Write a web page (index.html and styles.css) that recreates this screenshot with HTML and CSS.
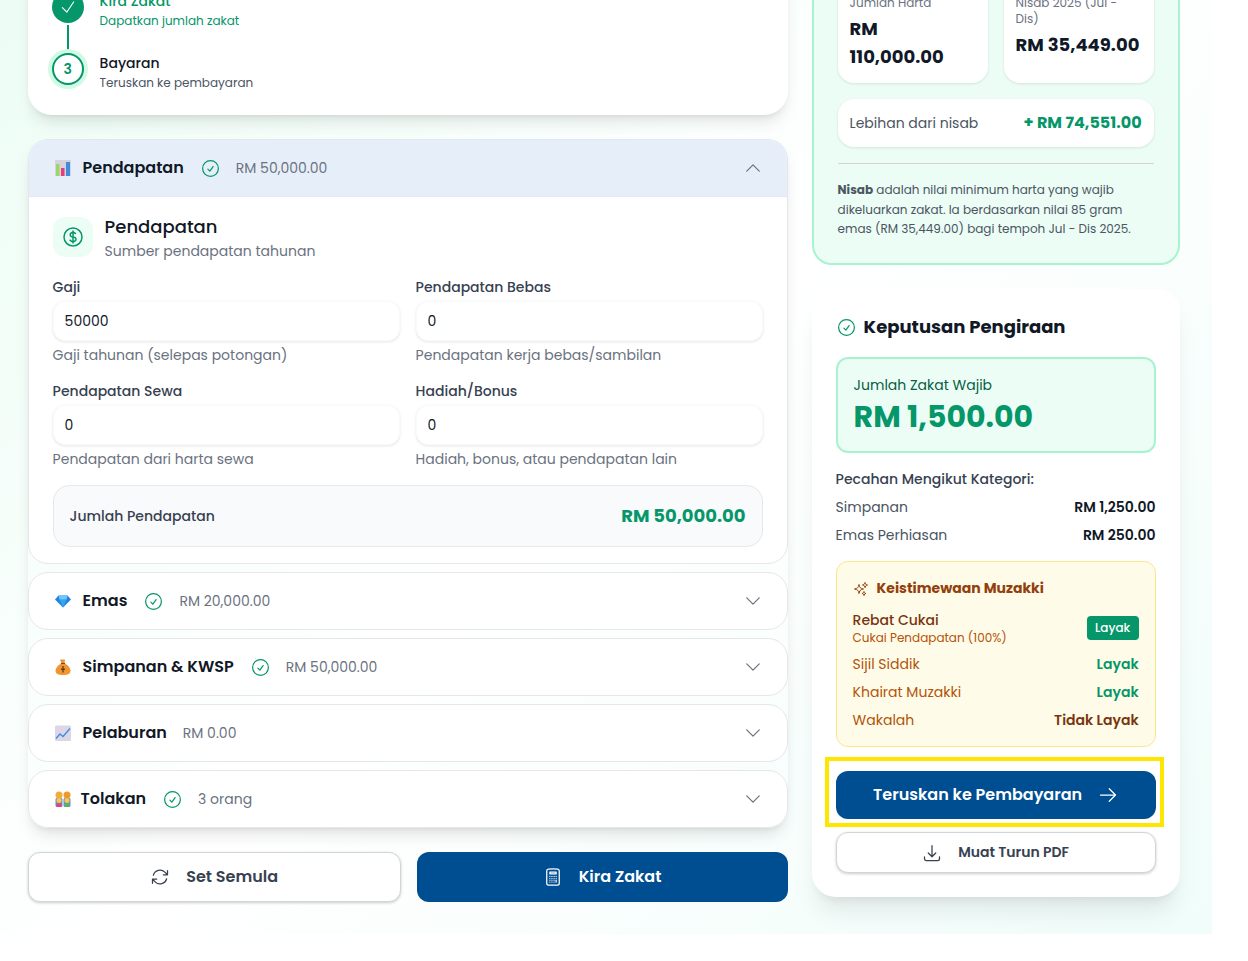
FILE: index.html
```html
<!DOCTYPE html>
<html lang="en">
<head>
    <meta charset="UTF-8">
    <meta name="viewport" content="width=device-width, initial-scale=1.0">
    <title>Kalkulator Zakat</title>
    <link rel="stylesheet" href="styles.css">
</head>
<body>

    <svg class="icon-sheet" aria-hidden="true">
        <symbol id="i-check-circle" viewBox="0 0 24 24"><path d="M9 12.75 11.25 15 15 9.75M21 12a9 9 0 1 1-18 0 9 9 0 0 1 18 0Z"/></symbol>
        <symbol id="i-check" viewBox="0 0 24 24"><path d="m4.5 12.75 6 6 9-13.5"/></symbol>
        <symbol id="i-down" viewBox="0 0 24 24"><path d="m19.5 8.25-7.5 7.5-7.5-7.5"/></symbol>
        <symbol id="i-up" viewBox="0 0 24 24"><path d="m4.5 15.75 7.5-7.5 7.5 7.5"/></symbol>
        <symbol id="i-dollar" viewBox="0 0 24 24"><path d="M12 6v12m-3-2.818.879.659c1.171.879 3.07.879 4.242 0 1.172-.879 1.172-2.303 0-3.182C13.536 12.219 12.768 12 12 12c-.725 0-1.45-.22-2.003-.659-1.106-.879-1.106-2.303 0-3.182s2.9-.879 4.006 0l.415.33M21 12a9 9 0 1 1-18 0 9 9 0 0 1 18 0Z"/></symbol>
        <symbol id="i-refresh" viewBox="0 0 24 24"><path d="M16.023 9.348h4.992v-.001M2.985 19.644v-4.992m0 0h4.992m-4.993 0 3.181 3.183a8.25 8.25 0 0 0 13.803-3.7M4.031 9.865a8.25 8.25 0 0 1 13.803-3.7l3.181 3.182m0-4.991v4.99"/></symbol>
        <symbol id="i-calc" viewBox="0 0 24 24"><path d="M15.75 15.75V18m-7.5-6.75h.008v.008H8.25v-.008Zm0 2.25h.008v.008H8.25V13.5Zm0 2.25h.008v.008H8.25v-.008Zm0 2.25h.008v.008H8.25V18Zm2.498-6.75h.007v.008h-.007v-.008Zm0 2.25h.007v.008h-.007V13.5Zm0 2.25h.007v.008h-.007v-.008Zm0 2.25h.007v.008h-.007V18Zm2.504-6.75h.008v.008h-.008v-.008Zm0 2.25h.008v.008h-.008V13.5Zm0 2.25h.008v.008h-.008v-.008Zm0 2.25h.008v.008h-.008V18Zm2.498-6.75h.008v.008h-.008v-.008Zm0 2.25h.008v.008h-.008V13.5ZM8.25 6h7.5v2.25h-7.5V6ZM12 2.25c-1.892 0-3.758.11-5.593.322C5.307 2.7 4.5 3.65 4.5 4.757V19.5a2.25 2.25 0 0 0 2.25 2.25h10.5a2.25 2.25 0 0 0 2.25-2.25V4.757c0-1.108-.806-2.057-1.907-2.185A48.507 48.507 0 0 0 12 2.25Z"/></symbol>
        <symbol id="i-sparkles" viewBox="0 0 24 24"><path d="M9.813 15.904 9 18.75l-.813-2.846a4.5 4.5 0 0 0-3.09-3.09L2.25 12l2.846-.813a4.5 4.5 0 0 0 3.09-3.09L9 5.25l.813 2.846a4.5 4.5 0 0 0 3.09 3.09L15.75 12l-2.846.813a4.5 4.5 0 0 0-3.09 3.09ZM18.259 8.715 18 9.75l-.259-1.035a3.375 3.375 0 0 0-2.455-2.456L14.25 6l1.036-.259a3.375 3.375 0 0 0 2.455-2.456L18 2.25l.259 1.035a3.375 3.375 0 0 0 2.456 2.456L21.75 6l-1.035.259a3.375 3.375 0 0 0-2.456 2.456ZM16.894 20.567 16.5 21.75l-.394-1.183a2.25 2.25 0 0 0-1.423-1.423L13.5 18.75l1.183-.394a2.25 2.25 0 0 0 1.423-1.423l.394-1.183.394 1.183a2.25 2.25 0 0 0 1.423 1.423l1.183.394-1.183.394a2.25 2.25 0 0 0-1.423 1.423Z"/></symbol>
        <symbol id="i-arrow" viewBox="0 0 24 24"><path d="M13.5 4.5 21 12m0 0-7.5 7.5M21 12H3"/></symbol>
        <symbol id="i-download" viewBox="0 0 24 24"><path d="M3 16.5v2.25A2.25 2.25 0 0 0 5.25 21h13.5A2.25 2.25 0 0 0 21 18.75V16.5M16.5 12 12 16.5m0 0L7.5 12m4.5 4.5V3"/></symbol>
    </svg>

    <div class="page">
        <div class="left-col">

            <div class="card steps">
                <div class="step">
                    <div class="step-marker">
                        <div class="step-circle done"><svg class="ico ico-18"><use href="#i-check"/></svg></div>
                        <div class="step-line"></div>
                    </div>
                    <div class="step-text done-text">
                        <div class="step-title">Kira Zakat</div>
                        <div class="step-sub">Dapatkan jumlah zakat</div>
                    </div>
                </div>
                <div class="step">
                    <div class="step-marker">
                        <div class="step-circle current">3</div>
                    </div>
                    <div class="step-text">
                        <div class="step-title">Bayaran</div>
                        <div class="step-sub">Teruskan ke pembayaran</div>
                    </div>
                </div>
            </div>

            <div class="accordion">
                <div class="acc-item">
                    <div class="acc-head open">
                        <svg class="emoji" viewBox="0 0 16 16">
                            <rect x="0" y="0" width="16" height="16" rx="1" fill="#d6d3dc"/>
                            <rect x="1" y="4" width="3.500" height="12" fill="#97d86a"/>
                            <rect x="6" y="8" width="3.500" height="8" fill="#ea3a7c"/>
                            <rect x="11" y="2" width="4" height="14" fill="#3e8edb"/>
                        </svg>
                        <span class="acc-title">Pendapatan</span>
                        <svg class="ico ico-check"><use href="#i-check-circle"/></svg>
                        <span class="acc-value">RM 50,000.00</span>
                        <svg class="ico chevron"><use href="#i-up"/></svg>
                    </div>
                    <div class="acc-body">
                        <div class="section-head">
                            <div class="section-icon"><svg class="ico ico-24"><use href="#i-dollar"/></svg></div>
                            <div>
                                <div class="section-title">Pendapatan</div>
                                <div class="section-sub">Sumber pendapatan tahunan</div>
                            </div>
                        </div>
                        <div class="fields">
                            <div class="field">
                                <label>Gaji</label>
                                <input type="text" value="50000">
                                <div class="hint">Gaji tahunan (selepas potongan)</div>
                            </div>
                            <div class="field">
                                <label>Pendapatan Bebas</label>
                                <input type="text" value="0">
                                <div class="hint">Pendapatan kerja bebas/sambilan</div>
                            </div>
                            <div class="field">
                                <label>Pendapatan Sewa</label>
                                <input type="text" value="0">
                                <div class="hint">Pendapatan dari harta sewa</div>
                            </div>
                            <div class="field">
                                <label>Hadiah/Bonus</label>
                                <input type="text" value="0">
                                <div class="hint">Hadiah, bonus, atau pendapatan lain</div>
                            </div>
                        </div>
                        <div class="total-box">
                            <span class="total-label">Jumlah Pendapatan</span>
                            <span class="total-value">RM 50,000.00</span>
                        </div>
                    </div>
                </div>

                <div class="acc-item">
                    <div class="acc-head">
                        <svg class="emoji" viewBox="0 0 16 16">
                            <path d="M3.500 2.500h9L16 6.500l-8 8-8-8Z" fill="#1f84e0"/>
                            <path d="M4.500 6.500h7L8 14.500Z" fill="#3ba2f2"/>
                            <path d="M3.500 2.500h9l-1 4h-7Z" fill="#6ec6fb"/>
                        </svg>
                        <span class="acc-title">Emas</span>
                        <svg class="ico ico-check"><use href="#i-check-circle"/></svg>
                        <span class="acc-value">RM 20,000.00</span>
                        <svg class="ico chevron"><use href="#i-down"/></svg>
                    </div>
                </div>

                <div class="acc-item">
                    <div class="acc-head">
                        <svg class="emoji" viewBox="0 0 16 16">
                            <path d="M5 0.500h5L9.500 4.500h-3Z" fill="#e8983c"/>
                            <path d="M6 4.500h4C13 6.500 15.500 9 15.500 11.500 15.500 15 12.500 16 8 16S0.500 15 0.500 11.500C0.500 9 3 6.500 6 4.500Z" fill="#f0952f"/>
                            <rect x="6" y="4" width="4" height="1" fill="#6b4a2a"/>
                            <rect x="7.400" y="7" width="1.200" height="6.500" fill="#5b3a1a"/>
                            <rect x="6" y="9.600" width="4" height="1.300" fill="#5b3a1a"/>
                        </svg>
                        <span class="acc-title">Simpanan &amp; KWSP</span>
                        <svg class="ico ico-check"><use href="#i-check-circle"/></svg>
                        <span class="acc-value">RM 50,000.00</span>
                        <svg class="ico chevron"><use href="#i-down"/></svg>
                    </div>
                </div>

                <div class="acc-item">
                    <div class="acc-head">
                        <svg class="emoji" viewBox="0 0 16 16">
                            <rect x="0" y="0.500" width="16" height="15.500" rx="1" fill="#dcd6e6"/>
                            <path d="M1 13.500 5 9l3 2.500L15 3.500" fill="none" stroke="#3f8fe0" stroke-width="1.400"/>
                        </svg>
                        <span class="acc-title">Pelaburan</span>
                        <span class="acc-value">RM 0.00</span>
                        <svg class="ico chevron"><use href="#i-down"/></svg>
                    </div>
                </div>

                <div class="acc-item">
                    <div class="acc-head">
                        <svg class="emoji wide" viewBox="0 0 18 16">
                            <rect x="1.500" y="7" width="7" height="9" rx="1.500" fill="#6a8fc4"/>
                            <rect x="9.500" y="7" width="7" height="9" rx="1.500" fill="#6a8fc4"/>
                            <circle cx="5" cy="4" r="3.500" fill="#f5ab35"/>
                            <circle cx="13" cy="4" r="3.500" fill="#f0982c"/>
                            <circle cx="5" cy="9.500" r="2.500" fill="#f7c948"/>
                            <circle cx="13" cy="9.500" r="2.500" fill="#f7c948"/>
                            <rect x="2.500" y="12.500" width="5" height="3.500" fill="#e0457a"/>
                            <rect x="10.500" y="12.500" width="5" height="3.500" fill="#58b368"/>
                        </svg>
                        <span class="acc-title">Tolakan</span>
                        <svg class="ico ico-check"><use href="#i-check-circle"/></svg>
                        <span class="acc-value">3 orang</span>
                        <svg class="ico chevron"><use href="#i-down"/></svg>
                    </div>
                </div>
            </div>

            <div class="actions">
                <button class="btn btn-white"><svg class="ico ico-20"><use href="#i-refresh"/></svg><span>Set Semula</span></button>
                <button class="btn btn-blue"><svg class="ico ico-20"><use href="#i-calc"/></svg><span>Kira Zakat</span></button>
            </div>
        </div>

        <div class="right-col">
            <div class="nisab-panel">
                <div class="nisab-grid">
                    <div class="mini-card">
                        <div class="mini-label">Jumlah Harta</div>
                        <div class="mini-value">RM 110,000.00</div>
                    </div>
                    <div class="mini-card">
                        <div class="mini-label">Nisab 2025 (Jul - Dis)</div>
                        <div class="mini-value">RM 35,449.00</div>
                    </div>
                </div>
                <div class="excess-row">
                    <span class="excess-label">Lebihan dari nisab</span>
                    <span class="excess-value">+ RM 74,551.00</span>
                </div>
                <p class="nisab-note"><b>Nisab</b> adalah nilai minimum harta yang wajib dikeluarkan zakat. Ia berdasarkan nilai 85 gram emas (RM 35,449.00) bagi tempoh Jul - Dis 2025.</p>
            </div>

            <div class="card result">
                <h3 class="result-title"><svg class="ico ico-check"><use href="#i-check-circle"/></svg><span>Keputusan Pengiraan</span></h3>

                <div class="zakat-box">
                    <div class="zakat-label">Jumlah Zakat Wajib</div>
                    <div class="zakat-amount">RM 1,500.00</div>
                </div>

                <div class="breakdown">
                    <div class="breakdown-title">Pecahan Mengikut Kategori:</div>
                    <div class="breakdown-row"><span>Simpanan</span><b>RM 1,250.00</b></div>
                    <div class="breakdown-row"><span>Emas Perhiasan</span><b>RM 250.00</b></div>
                </div>

                <div class="perks">
                    <div class="perks-title"><svg class="ico ico-16"><use href="#i-sparkles"/></svg>Keistimewaan Muzakki</div>
                    <div class="perk-main">
                        <div>
                            <div class="perk-name">Rebat Cukai</div>
                            <div class="perk-sub">Cukai Pendapatan (100%)</div>
                        </div>
                        <span class="perk-badge">Layak</span>
                    </div>
                    <div class="perk-row"><span>Sijil Siddik</span><b class="yes">Layak</b></div>
                    <div class="perk-row"><span>Khairat Muzakki</span><b class="yes">Layak</b></div>
                    <div class="perk-row"><span>Wakalah</span><b class="no">Tidak Layak</b></div>
                </div>

                <button class="btn btn-blue btn-pay">
                    <span>Teruskan ke Pembayaran</span><svg class="ico ico-20"><use href="#i-arrow"/></svg>
                    <span class="highlight"></span>
                </button>
                <button class="btn btn-white btn-pdf"><svg class="ico ico-20"><use href="#i-download"/></svg>Muat Turun PDF</button>
            </div>
        </div>
    </div>

</body>
</html>
```

FILE: styles.css
```css
* {
    box-sizing: border-box;
}
body {
    margin: 0;
    background: #fff;
    font-family: Poppins, Inter, sans-serif;
    color: #111827;
    height: 961px;
    overflow: hidden;
}
.icon-sheet {
    display: none;
}
.page {
    width: 1212px;
    height: 974px;
    margin-top: -40px;
    padding: 0 32px 0 27.6px;
    display: flex;
    gap: 24px;
    background: linear-gradient(135deg, #ecfdf5, #fff 50%, #f0fdfa);
}
.left-col {
    width: 760px;
}
.right-col {
    width: 368px;
}

.ico {
    fill: none;
    stroke: currentColor;
    stroke-width: 1.5;
    stroke-linecap: round;
    stroke-linejoin: round;
    flex: none;
}
.ico-16 { width: 16px; height: 16px; }
.ico-18 { width: 18px; height: 18px; }
.ico-20 { width: 20px; height: 20px; }
.ico-24 { width: 24px; height: 24px; }

.card {
    background: #fff;
    border-radius: 24px;
    box-shadow: 0 10px 15px -3px rgba(0, 0, 0, 0.1), 0 4px 6px -4px rgba(0, 0, 0, 0.1);
}

/* steps */
.steps {
    height: 155px;
    padding: 31px 24px 24px;
    margin-bottom: 24px;
}
.step {
    display: flex;
    gap: 16px;
}
.step-marker {
    width: 32px;
    flex: none;
}
.step-circle {
    width: 32px;
    height: 32px;
    border-radius: 50%;
    display: flex;
    align-items: center;
    justify-content: center;
    font-size: 14px;
    font-weight: 600;
    color: #059669;
}
.step-circle.done {
    background: #059669;
    color: #fff;
}
.step-circle.current {
    background: #fff;
    border: 2px solid #059669;
    box-shadow: 0 0 0 4px #d1fae5;
}
.step-line {
    width: 2px;
    height: 26px;
    margin: 2px auto;
    background: #059669;
}
.step-title {
    font-size: 14px;
    font-weight: 500;
    line-height: 21px;
}
.step-sub {
    font-size: 12px;
    line-height: 18px;
    color: #4b5563;
}
.done-text .step-title,
.done-text .step-sub {
    color: #059669;
}

/* accordion */
.accordion {
    display: flex;
    flex-direction: column;
    gap: 8px;
    border-radius: 20px;
    box-shadow: 0 10px 15px -3px rgba(0, 0, 0, 0.1), 0 4px 6px -4px rgba(0, 0, 0, 0.1);
}
.acc-item {
    background: #fff;
    border: 1px solid #e5e7eb;
    border-radius: 20px;
    overflow: hidden;
}
.acc-head {
    height: 56px;
    padding: 0 24px;
    display: flex;
    align-items: center;
}
.acc-head.open {
    background: #e6eff9;
    border-bottom: 1px solid #e5e7eb;
    height: 57px;
}
.emoji {
    width: 16px;
    height: 16px;
    margin-left: 2px;
    margin-right: 12px;
    flex: none;
}
.emoji.wide {
    width: 18px;
    margin-left: 1px;
    margin-right: 9px;
}
.acc-title {
    font-size: 16px;
    font-weight: 600;
    margin-right: 16px;
    margin-bottom: 2px;
}
.ico-check {
    width: 21px;
    height: 21px;
    stroke-width: 1.4;
    margin-right: 15px;
    color: #059669;
}
.acc-value {
    font-size: 14px;
    color: #6b7280;
}
.chevron {
    width: 20px;
    height: 20px;
    margin-left: auto;
    color: #6b7280;
}
.acc-body {
    padding: 20px 24px 16px;
}
.section-head {
    display: flex;
    align-items: flex-start;
    gap: 12px;
    height: 44px;
    margin-bottom: 16px;
}
.section-icon {
    width: 40px;
    height: 40px;
    border-radius: 12px;
    background: #ecfdf5;
    color: #059669;
    display: flex;
    align-items: center;
    justify-content: center;
}
.section-title {
    font-size: 18px;
    font-weight: 500;
    line-height: 20px;
    margin-bottom: 4px;
}
.section-sub {
    font-size: 14px;
    line-height: 21px;
    color: #6b7280;
}
.fields {
    display: grid;
    grid-template-columns: 1fr 1fr;
    column-gap: 16px;
    row-gap: 15px;
    margin-bottom: 15px;
}
.field label {
    display: block;
    font-size: 14px;
    font-weight: 500;
    line-height: 21px;
    color: #374151;
    margin-bottom: 3px;
}
.field input {
    display: block;
    width: 100%;
    height: 40px;
    padding: 0 11px;
    border: 1px solid #f9fafb;
    border-radius: 12px;
    background: #fff;
    box-shadow: 0 1px 3px rgba(0, 0, 0, 0.1);
    font: inherit;
    font-size: 14px;
    color: #111827;
    outline: none;
}
.hint {
    margin-top: 4px;
    font-size: 14px;
    line-height: 21px;
    color: #6b7280;
}
.total-box {
    height: 62px;
    padding: 0 16px;
    display: flex;
    align-items: center;
    justify-content: space-between;
    background: #f9fafb;
    border: 1px solid #e5e7eb;
    border-radius: 16px;
}
.total-label {
    font-size: 14px;
    font-weight: 500;
    color: #374151;
}
.total-value {
    font-size: 18px;
    font-weight: 700;
    color: #059669;
    margin-bottom: 2px;
}

/* buttons */
.actions {
    display: grid;
    grid-template-columns: 373fr 371fr;
    gap: 16px;
    margin-top: 24px;
}
.btn {
    height: 50px;
    width: 100%;
    border-radius: 12px;
    display: flex;
    align-items: center;
    justify-content: center;
    gap: 16px;
    font-family: inherit;
    font-size: 16px;
    font-weight: 600;
    cursor: pointer;
}
.btn > span:not(.highlight) {
    margin-bottom: 2px;
}
.btn-white {
    background: #fff;
    border: 1px solid #d1d5db;
    color: #374151;
    box-shadow: 0 1px 3px rgba(0, 0, 0, 0.2);
}
.btn-blue {
    background: #004e92;
    border: none;
    color: #fff;
}

/* nisab */
.nisab-panel {
    height: 305px;
    padding: 21px 24px 24px;
    margin-bottom: 24px;
    background: #ecfdf5;
    border: 2px solid #a7f3d0;
    border-radius: 20px;
}
.nisab-grid {
    display: grid;
    grid-template-columns: 1fr 1fr;
    gap: 16px;
}
.mini-card {
    height: 100px;
    padding: 12px;
    background: #fff;
    border-radius: 16px;
    box-shadow: 0 1px 3px rgba(0, 0, 0, 0.1);
}
.mini-label {
    font-size: 12px;
    line-height: 16px;
    color: #6b7280;
    margin-bottom: 4px;
}
.mini-value {
    font-size: 18px;
    font-weight: 700;
    line-height: 28px;
}
.excess-row {
    height: 48px;
    margin-top: 16px;
    padding: 0 12px;
    display: flex;
    align-items: center;
    justify-content: space-between;
    background: #fff;
    border-radius: 16px;
    box-shadow: 0 1px 3px rgba(0, 0, 0, 0.1);
}
.excess-label {
    font-size: 14px;
    color: #4b5563;
}
.excess-value {
    font-size: 16px;
    font-weight: 700;
    color: #059669;
    margin-bottom: 2px;
}
.nisab-note {
    margin: 16px 0 0;
    padding-top: 16px;
    border-top: 1px solid #d1d5db;
    font-size: 12px;
    line-height: 19.5px;
    color: #4b5563;
}

/* result */
.result {
    height: 608px;
    padding: 24px;
    box-shadow: 0 20px 25px -5px rgba(0, 0, 0, 0.08), 0 8px 10px -6px rgba(0, 0, 0, 0.08);
}
.result-title {
    margin: 0 0 16px;
    height: 28px;
    display: flex;
    align-items: center;
    font-size: 18px;
    font-weight: 700;
}
.result-title span {
    margin-bottom: 2px;
}
.result-title .ico-check {
    margin-right: 7px;
}
.zakat-box {
    height: 96px;
    padding: 16px;
    background: #ecfdf5;
    border: 2px solid #a7f3d0;
    border-radius: 12px;
}
.zakat-label {
    font-size: 14px;
    line-height: 20px;
    color: #065f46;
}
.zakat-amount {
    font-size: 30px;
    font-weight: 700;
    line-height: 44px;
    color: #059669;
}
.breakdown {
    margin-top: 16px;
}
.breakdown-title {
    font-size: 14px;
    font-weight: 500;
    line-height: 21px;
    color: #374151;
    margin-bottom: 3px;
}
.breakdown-row {
    height: 28px;
    display: flex;
    align-items: center;
    justify-content: space-between;
    font-size: 14px;
    color: #4b5563;
}
.breakdown-row b {
    font-weight: 600;
    color: #111827;
}
.perks {
    height: 186px;
    margin-top: 12px;
    padding: 16px;
    background: #fefce8;
    border: 1px solid #fde68a;
    border-radius: 12px;
    color: #b45309;
}
.perks-title {
    display: flex;
    align-items: center;
    gap: 8px;
    height: 21px;
    font-size: 14px;
    font-weight: 700;
    color: #92400e;
    margin-bottom: 12px;
}
.perk-main {
    display: flex;
    align-items: center;
    justify-content: space-between;
    margin-bottom: 4px;
}
.perk-name {
    font-size: 14px;
    line-height: 18px;
    font-weight: 500;
    color: #78350f;
}
.perk-sub {
    font-size: 12px;
    line-height: 17px;
    color: #b45309;
}
.perk-badge {
    width: 52px;
    height: 24px;
    margin-bottom: 2px;
    display: flex;
    align-items: center;
    justify-content: center;
    border-radius: 4px;
    background: #059669;
    color: #fff;
    font-size: 12px;
    font-weight: 500;
}
.perk-row {
    height: 28px;
    display: flex;
    align-items: center;
    justify-content: space-between;
    font-size: 14px;
}
.perk-row b {
    font-weight: 600;
}
.perk-row .yes { color: #059669; }
.perk-row .no { color: #78350f; }
.btn-pay {
    position: relative;
    height: 48px;
    margin-top: 24px;
}
.highlight {
    position: absolute;
    top: -14px;
    right: -8px;
    bottom: -8px;
    left: -11px;
    border: 4px solid #ffe600;
}
.btn-pdf {
    height: 41px;
    margin-top: 13px;
    font-size: 14px;
    font-weight: 600;
}
```
